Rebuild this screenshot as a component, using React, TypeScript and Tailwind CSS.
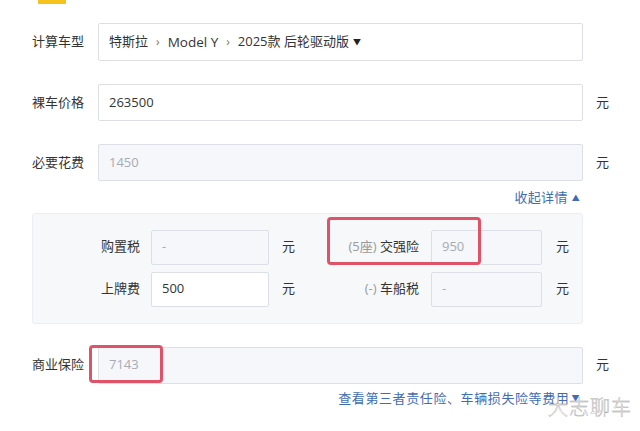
import React from "react";

const font = { fontFamily: '"Open Sans", "Noto Sans CJK SC", "Microsoft YaHei", sans-serif' };

function Label({ children }: { children: React.ReactNode }) {
  return <div className="w-[98px] pl-[32px] text-[13px] text-[#333]">{children}</div>;
}

export default function App() {
  return (
    <div className="relative w-[640px] h-[431px] bg-white overflow-hidden" style={font}>
      <div className="ml-[38px] w-[28px] h-[4px] bg-[#f6c21c]" />

      {/* row 1 */}
      <div className="mt-[19px] flex items-center">
        <Label>计算车型</Label>
        <div className="w-[485px] h-[38px] border border-[#dcdfe6] rounded-[2px] flex items-center pl-[10px] text-[13px] text-[#333]">
          <span>特斯拉</span>
          <span className="mx-[8px] text-[#777] text-[12px]">›</span>
          <span className="text-[13.5px]">Model Y</span>
          <span className="mx-[8px] text-[#777] text-[12px]">›</span>
          <span>2025款 后轮驱动版</span>
          <span className="ml-[4px] text-[8px] text-[#222]">▼</span>
        </div>
      </div>

      {/* row 2 */}
      <div className="mt-[23px] flex items-center">
        <Label>裸车价格</Label>
        <div className="w-[485px] h-[37px] border border-[#dcdfe6] rounded-[2px] flex items-center pl-[10px] text-[13px] text-[#333]">
          263500
        </div>
        <div className="ml-[13px] text-[13px] text-[#333]">元</div>
      </div>

      {/* row 3 */}
      <div className="mt-[23px] flex items-center">
        <Label>必要花费</Label>
        <div className="w-[485px] h-[37px] border border-[#dcdfe6] bg-[#f5f7fa] rounded-[2px] flex items-center pl-[10px] text-[13px] text-[#a8abb2]">
          1450
        </div>
        <div className="ml-[13px] text-[13px] text-[#333]">元</div>
      </div>

      <div className="w-[580px] mt-[7px] flex justify-end items-center text-[13px] text-[#3f6cb5] tracking-[0.3px]">
        <span>收起详情</span>
        <span className="ml-[4px] text-[8px]">▲</span>
      </div>

      {/* panel */}
      <div className="mt-[5px] ml-[32px] w-[551px] border border-[#ebeef5] bg-[#f7f8fa] rounded-[3px] pt-[16px] pb-[16px] flex flex-col gap-[7px] text-[13px] text-[#333]">
        <div className="flex items-center">
          <div className="w-[107px] text-right">购置税</div>
          <div className="ml-[11px] w-[118px] h-[35px] border border-[#dcdfe6] bg-[#f5f7fa] rounded-[2px] flex items-center pl-[10px] text-[#a8abb2]">-</div>
          <div className="ml-[13px] w-[13px]">元</div>
          <div className="w-[124px] text-right"><span className="text-[#999]">(5座)</span> 交强险</div>
          <div className="ml-[12px] w-[111px] h-[35px] border border-[#dcdfe6] bg-[#f5f7fa] rounded-[2px] flex items-center pl-[10px] text-[#a8abb2]">950</div>
          <div className="ml-[14px]">元</div>
        </div>
        <div className="flex items-center">
          <div className="w-[107px] text-right">上牌费</div>
          <div className="ml-[11px] w-[118px] h-[35px] border border-[#dcdfe6] bg-white rounded-[2px] flex items-center pl-[10px]">500</div>
          <div className="ml-[13px] w-[13px]">元</div>
          <div className="w-[124px] text-right"><span className="text-[#999]">(-)</span> 车船税</div>
          <div className="ml-[12px] w-[111px] h-[35px] border border-[#dcdfe6] bg-[#f5f7fa] rounded-[2px] flex items-center pl-[10px] text-[#a8abb2]">-</div>
          <div className="ml-[14px]">元</div>
        </div>
      </div>

      {/* row 4 */}
      <div className="mt-[23px] flex items-center">
        <Label>商业保险</Label>
        <div className="w-[485px] h-[37px] border border-[#dcdfe6] bg-[#f5f7fa] rounded-[2px] flex items-center pl-[10px] text-[13px] text-[#a8abb2]">
          7143
        </div>
        <div className="ml-[13px] text-[13px] text-[#333]">元</div>
      </div>

      <div className="w-[580px] mt-[5px] flex justify-end items-center text-[13px] text-[#3f6cb5] tracking-[0.6px]">
        <span>查看第三者责任险、车辆损失险等费用</span>
        <span className="ml-[2px] text-[8px]">▼</span>
      </div>

      {/* highlight boxes */}
      <div className="absolute left-[327px] top-[217px] w-[154px] h-[48px] border-[3px] border-[#e05268] rounded-[4px]" />
      <div className="absolute left-[89px] top-[345px] w-[74px] h-[38px] border-[3px] border-[#e05268] rounded-[4px]" />

      {/* watermark */}
      <div
        className="absolute left-[548px] top-[393px] text-[20px] text-white tracking-[1px] font-light"
        style={{ WebkitTextStroke: "0.4px #a0a0a0" }}
      >
        大志聊车
      </div>
    </div>
  );
}
